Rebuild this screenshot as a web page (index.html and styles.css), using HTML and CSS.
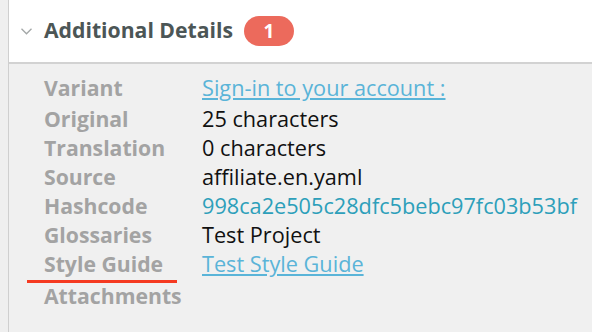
FILE: index.html
```html
<!DOCTYPE html>
<html>
<head>
<meta charset="utf-8">
<link rel="stylesheet" href="styles.css">
</head>
<body>
<div class="panel">
  <div class="header">
    <svg class="chevron" width="11" height="7" viewBox="0 0 11 7"><path d="M0.5 0.8 L5.5 5.8 L10.5 0.8" fill="none" stroke="#a3a7a7" stroke-width="1.3"/></svg>
    <h2 class="title">Additional Details</h2>
    <span class="badge">1</span>
  </div>
  <div class="details">
    <div class="label first">Variant</div><div class="value first"><a class="link" href="#">Sign-in to your account :</a></div>
    <div class="label">Original</div><div class="value">25 characters</div>
    <div class="label">Translation</div><div class="value">0 characters</div>
    <div class="label">Source</div><div class="value">affiliate.en.yaml</div>
    <div class="label">Hashcode</div><div class="value hash">998ca2e505c28dfc5bebc97fc03b53bf</div>
    <div class="label">Glossaries</div><div class="value">Test Project</div>
    <div class="label marked">Style Guide</div><div class="value"><a class="link" href="#">Test Style Guide</a></div>
    <div class="label">Attachments</div><div class="value"></div>
  </div>
</div>
</body>
</html>
```
FILE: styles.css
```css
html, body {
  margin: 0;
  padding: 0;
  background: #efefef;
  font-family: "Open Sans", "Noto Sans", sans-serif;
}
.panel {
  margin-left: 8px;
  border-left: 1px solid #cfcfcf;
  min-height: 332px;
  background: #f0f0f0;
}
.header {
  height: 64px;
  background: #ffffff;
  border-bottom: 2px solid #d2d2d2;
  display: flex;
  align-items: center;
  padding-left: 12px;
  box-sizing: border-box;
  padding-bottom: 3px;
}
.chevron {
  margin-right: 12px;
  margin-top: 3px;
}
.title {
  margin: 0;
  font-size: 21.2px;
  font-weight: 700;
  color: #4c5656;
}
.badge {
  margin-left: 11px;
  margin-top: 2px;
  background: #ec6a5c;
  color: #fff;
  font-weight: 700;
  font-size: 19px;
  height: 30px;
  width: 50px;
  border-radius: 15px;
  display: flex;
  align-items: center;
  justify-content: center;
}
.details {
  display: grid;
  grid-template-columns: 158px auto;
  align-items: baseline;
  padding: 9px 0 0 35px;
  line-height: 29px;
}
.label {
  font-weight: 700;
  font-size: 21.2px;
  color: #a3a3a3;
}
.value {
  font-size: 21.7px;
  color: #111;
}
.first {
  margin-bottom: 2px;
}
.link {
  color: #5ab4d8;
  text-decoration: underline;
}
.hash {
  color: #2d9fba;
}
.marked {
  position: relative;
  padding-bottom: 3px;
}
.marked::after {
  content: "";
  position: absolute;
  left: -17px;
  bottom: -2px;
  width: 150px;
  height: 3px;
  background: #f53a21;
}
```
